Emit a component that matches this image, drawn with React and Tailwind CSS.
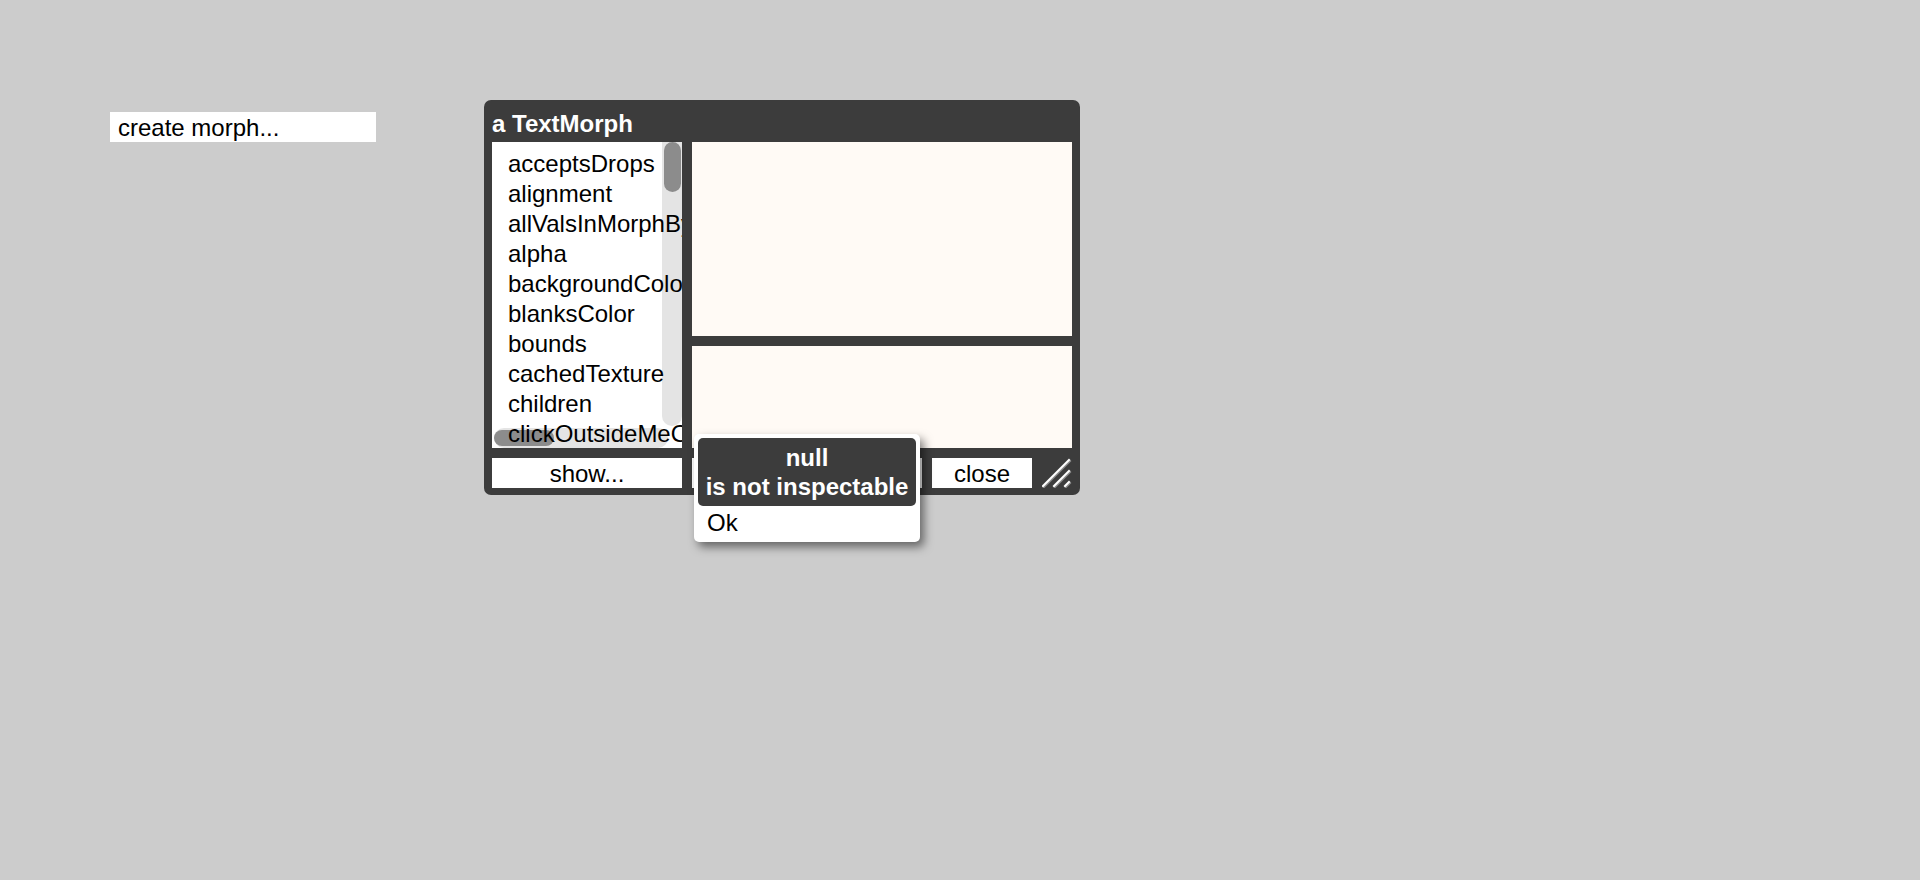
const slots = [
  "acceptsDrops",
  "alignment",
  "allValsInMorphByName",
  "alpha",
  "backgroundColor",
  "blanksColor",
  "bounds",
  "cachedTexture",
  "children",
  "clickOutsideMeOrAnyOfMeChildren",
]

function ResizeHandle() {
  return (
    <svg width="30" height="30" viewBox="0 0 30 30" className="block">
      <g stroke="#8a8a8a" strokeWidth="2" strokeLinecap="square">
        <line x1="2" y1="29" x2="28" y2="3" />
        <line x1="13" y1="29" x2="28" y2="14" />
        <line x1="24" y1="29" x2="28" y2="25" />
      </g>
      <g stroke="#ffffff" strokeWidth="2" strokeLinecap="square">
        <line x1="1" y1="28" x2="27" y2="2" />
        <line x1="12" y1="28" x2="27" y2="13" />
        <line x1="23" y1="28" x2="27" y2="24" />
      </g>
    </svg>
  )
}

function SlotList() {
  return (
    <div className="relative w-[190px] h-full bg-white overflow-hidden">
      <div className="absolute left-[170px] top-0 w-[20px] h-[284px] bg-[#e4e4e4] rounded-b-[10px]">
        <div className="ml-[2px] w-[17px] h-[50px] rounded-full bg-[#8c8c8c]" />
      </div>
      <div className="absolute left-[2px] top-[286px] w-[174px] h-[20px] bg-[#e4e4e4] rounded-full">
        <div className="mt-[2px] w-[60px] h-[16px] rounded-full bg-[#8c8c8c]" />
      </div>
      <ul className="relative z-10 pt-[7px] pl-[16px] whitespace-nowrap">
        {slots.map((s) => (
          <li key={s} className="h-[30px] leading-[30px] text-[24px] text-black">
            {s}
          </li>
        ))}
      </ul>
    </div>
  )
}

export default function App() {
  return (
    <div className="relative w-[1920px] h-[880px] overflow-hidden bg-[#cccccc] font-['Liberation_Sans',Arial,sans-serif]">
      <div className="absolute left-[110px] top-[112px] w-[266px] h-[30px] bg-white pl-[8px] pt-[1px] text-[24px] leading-[29px] text-black">
        create morph...
      </div>

      <div className="absolute left-[484px] top-[100px] w-[596px] h-[395px] rounded-[7px] bg-[#3c3c3c] px-[8px] pt-[9px] flex flex-col">
        <div className="h-[30px] leading-[30px] text-[24px] font-bold text-white">a TextMorph</div>
        <div className="mt-[3px] h-[306px] flex gap-[10px]">
          <SlotList />
          <div className="w-[380px] flex flex-col gap-[10px]">
            <div className="h-[194px] bg-[#fffaf5]" />
            <div className="flex-1 bg-[#fffaf5]" />
          </div>
        </div>
        <div className="mt-[10px] h-[30px] flex gap-[10px] text-[24px] leading-[29px] text-black text-center">
          <div className="w-[190px] bg-white pt-[1px]">show...</div>
          <div className="w-[230px] bg-white pt-[1px]">edit...</div>
          <div className="w-[100px] bg-white pt-[1px]">close</div>
          <ResizeHandle />
        </div>
      </div>

      <div className="absolute left-[694px] top-[434px] w-[226px] h-[108px] rounded-[5px] bg-white p-[4px] shadow-[4px_5px_10px_rgba(0,0,0,0.5)]">
        <div className="h-[68px] rounded-[5px] bg-[#3c3c3c] pt-[5px] text-center text-[24px] leading-[29px] font-bold text-white whitespace-nowrap">
          <div>null</div>
          <div>is not inspectable</div>
        </div>
        <div className="pt-[2px] pl-[9px] text-[24px] leading-[30px] text-black">Ok</div>
      </div>
    </div>
  )
}
